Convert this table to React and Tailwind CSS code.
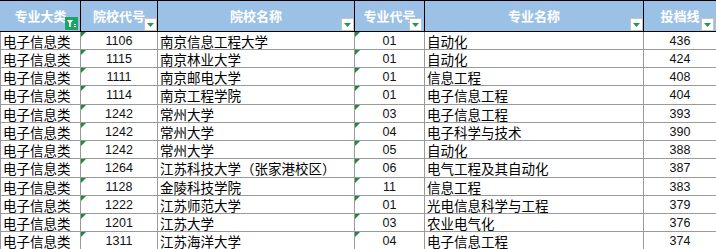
import React from "react";

const cols = [
  { title: "专业大类", w: "w-[80px]", align: "left", filtered: true, btn: "right-[2px]" },
  { title: "院校代号", w: "w-[77px]", align: "center", mark: true, btn: "right-0" },
  { title: "院校名称", w: "w-[197px]", align: "left", btn: "right-0" },
  { title: "专业代号", w: "w-[70px]", align: "center", mark: true, btn: "right-[2px]" },
  { title: "专业名称", w: "w-[219px]", align: "left", btn: "right-0" },
  { title: "投档线", w: "w-[73px]", align: "center", btn: "right-[2px]" },
];

const rows = [
  ["电子信息类", "1106", "南京信息工程大学", "01", "自动化", "436"],
  ["电子信息类", "1115", "南京林业大学", "01", "自动化", "424"],
  ["电子信息类", "1111", "南京邮电大学", "01", "信息工程", "408"],
  ["电子信息类", "1114", "南京工程学院", "01", "电子信息工程", "404"],
  ["电子信息类", "1242", "常州大学", "03", "电子信息工程", "393"],
  ["电子信息类", "1242", "常州大学", "04", "电子科学与技术", "390"],
  ["电子信息类", "1242", "常州大学", "05", "自动化", "388"],
  ["电子信息类", "1264", "江苏科技大学（张家港校区）", "06", "电气工程及其自动化", "387"],
  ["电子信息类", "1128", "金陵科技学院", "11", "信息工程", "383"],
  ["电子信息类", "1222", "江苏师范大学", "01", "光电信息科学与工程", "379"],
  ["电子信息类", "1201", "江苏大学", "03", "农业电气化", "376"],
  ["电子信息类", "1311", "江苏海洋大学", "04", "电子信息工程", "374"],
];

const rowHeights = [
  "h-[18px]", "h-[18px]", "h-[18px]", "h-[19px]", "h-[18px]", "h-[18px]",
  "h-[18px]", "h-[19px]", "h-[18px]", "h-[18px]", "h-[18px]", "h-[18px]",
];

const DropBtn = ({ pos }) => (
  <div className={`absolute bottom-0 ${pos} w-[13px] h-[13px] bg-white border border-[#c6c6c6] flex items-center justify-center`}>
    <svg width="7" height="5" viewBox="0 0 7 5" className="mt-[2px]">
      <polygon points="0,0 7,0 3.5,4" fill="#1f9b57" />
    </svg>
  </div>
);

const FilterOn = ({ pos }) => (
  <div className={`absolute bottom-[1px] ${pos} w-[13px] h-[13px] bg-[#21a366]`}>
    <svg width="13" height="13" viewBox="0 0 13 13">
      <path d="M2 3 H8 L5.8 6 V10 H4.2 V6 Z" fill="#fff" />
      <rect x="9" y="7" width="2" height="1" fill="#fff" />
      <rect x="9" y="9" width="2" height="1" fill="#fff" />
    </svg>
  </div>
);

export default function App() {
  return (
    <div className="w-[716px] h-[249px] overflow-hidden bg-white">
      <div className="flex h-[32px] bg-[#9bc2e6] border-t border-b border-black">
        {cols.map((c, i) => (
          <div
            key={c.title}
            className={`${c.w} relative flex items-center justify-center border-l ${i === 0 ? "border-[#9bc2e6]" : "border-black"} text-white font-bold text-[13px] font-['Noto_Sans_CJK_SC',sans-serif]`}
          >
            <span className="-mt-[1px] whitespace-nowrap leading-[16px]">{c.title}</span>
            {c.filtered ? <FilterOn pos={c.btn} /> : <DropBtn pos={c.btn} />}
          </div>
        ))}
      </div>

      {rows.map((r, ri) => (
        <div key={ri} className={`flex ${rowHeights[ri]} border-b border-[#9a9a9a]`}>
          {r.map((v, ci) => {
            const c = cols[ci];
            const isNum = /^[0-9]+$/.test(v);
            return (
              <div
                key={ci}
                className={`${c.w} relative flex items-center border-l border-[#9a9a9a] whitespace-nowrap ${
                  c.align === "center" ? "justify-center" : "justify-start pl-[2px]"
                } ${
                  isNum
                    ? "text-[12.5px] font-['Liberation_Sans',sans-serif] text-[#111]"
                    : "text-[13.5px] font-['Noto_Sans_CJK_SC',sans-serif] text-black"
                }`}
              >
                {c.mark && (
                  <svg width="5" height="5" viewBox="0 0 5 5" className="absolute top-0 left-0">
                    <polygon points="0,0 5,0 0,5" fill="#1e8a3c" />
                  </svg>
                )}
                <span className="leading-[14px]">{v}</span>
              </div>
            );
          })}
        </div>
      ))}
    </div>
  );
}
